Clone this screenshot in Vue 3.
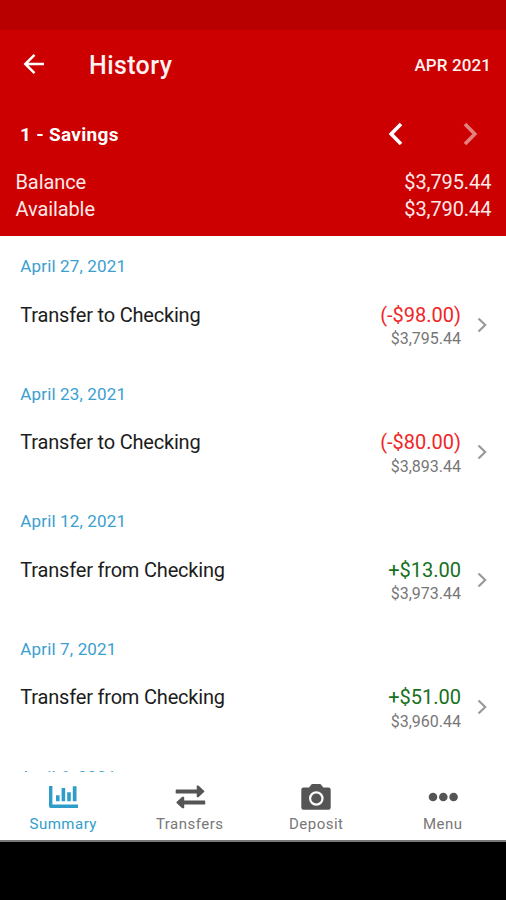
<script setup>
const groups = [
  { date: 'April 27, 2021', title: 'Transfer to Checking', amount: '(-$98.00)', balance: '$3,795.44', debit: true },
  { date: 'April 23, 2021', title: 'Transfer to Checking', amount: '(-$80.00)', balance: '$3,893.44', debit: true },
  { date: 'April 12, 2021', title: 'Transfer from Checking', amount: '+$13.00', balance: '$3,973.44', debit: false },
  { date: 'April 7, 2021', title: 'Transfer from Checking', amount: '+$51.00', balance: '$3,960.44', debit: false },
]
</script>

<template>
  <div class="screen">
    <div class="status"></div>
    <header class="head">
      <div class="bar">
        <svg class="back" width="22" height="22" viewBox="0 0 22 22"><path d="M11.5 1.8 2.3 11l9.2 9.2M2.5 11H21" /></svg>
        <h1>History</h1>
        <span class="month">APR 2021</span>
      </div>
      <div class="account">
        <span class="name">1 - Savings</span>
        <svg class="prev" width="16" height="24" viewBox="0 0 16 24"><path d="M13 2 3.2 12 13 22" /></svg>
        <svg class="next" width="16" height="24" viewBox="0 0 16 24"><path d="M3 2l9.8 10L3 22" /></svg>
      </div>
      <div class="totals">
        <div class="total"><span>Balance</span><span class="sum">$3,795.44</span></div>
        <div class="total"><span>Available</span><span class="sum">$3,790.44</span></div>
      </div>
    </header>

    <main class="list">
      <section v-for="g in groups" :key="g.date" class="group">
        <div class="date">{{ g.date }}</div>
        <div class="entry">
          <span class="title">{{ g.title }}</span>
          <div class="figures">
            <span class="amount" :class="{ debit: g.debit }">{{ g.amount }}</span>
            <span class="balance">{{ g.balance }}</span>
          </div>
          <svg class="more" width="11" height="16" viewBox="0 0 11 16"><path d="M1.5 1.5 8.2 8l-6.7 6.5" /></svg>
        </div>
      </section>
      <section class="group last"><div class="date">April 6, 2021</div></section>
    </main>

    <nav class="tabs">
      <a class="tab active">
        <svg width="32" height="28" viewBox="0 0 32 28">
          <path d="M3.7 3v20.3H31" fill="none" stroke="currentColor" stroke-width="3.4" stroke-linejoin="round" />
          <path d="M9 12.3h3.6v5.9H9zM14.6 5h3.6v13.2h-3.6zM20.2 9.2h3.6v9h-3.6zM25.8 3.2h3.7v15h-3.7z" />
        </svg>
        <span>Summary</span>
      </a>
      <a class="tab">
        <svg width="32" height="28" viewBox="0 0 32 28">
          <g stroke="currentColor" stroke-width="1.2" stroke-linejoin="round">
            <path d="M2.3 7h21V3.2h1l5.6 5.2-5.6 5.2h-1V9.9h-21zM30.6 18h-21v-3.7h-1L3 19.5l5.6 5.2h1V21h21z" />
          </g>
        </svg>
        <span>Transfers</span>
      </a>
      <a class="tab">
        <svg width="32" height="28" viewBox="0 0 32 28">
          <path d="M3.5 4.5H9l2-2.6q.5-.8 1.5-.8h7.3q1 0 1.5.8l2 2.6h5.2q2.2 0 2.2 2.2v17.8q0 2.2-2.2 2.2h-25q-2.2 0-2.2-2.2V6.7q0-2.2 2.2-2.2z" />
          <circle cx="16.3" cy="15.5" r="6.2" fill="none" stroke="#fff" stroke-width="2.2" />
        </svg>
        <span>Deposit</span>
      </a>
      <a class="tab">
        <svg width="32" height="28" viewBox="0 0 32 28">
          <circle cx="6" cy="14" r="4.3" /><circle cx="16.3" cy="14" r="4.3" /><circle cx="26.6" cy="14" r="4.3" />
        </svg>
        <span>Menu</span>
      </a>
    </nav>
    <div class="system"></div>
  </div>
</template>

<style>
body { margin: 0; background: #000; }
</style>

<style scoped>
.screen {
  width: 506px;
  height: 900px;
  display: flex;
  flex-direction: column;
  overflow: hidden;
  background: #fff;
  font-family: Roboto, "Liberation Sans", sans-serif;
}
.screen * { box-sizing: border-box; }
svg { flex: none; display: block; fill: currentColor; }
.status { flex: none; height: 30px; background: #b90000; }
.head { flex: none; height: 206px; background: #cc0000; color: #fff; }
.bar { height: 70px; display: flex; align-items: center; padding: 0 15px 0 23px; }
.back { fill: none; stroke: #fff; stroke-width: 2.5; margin-top: -2px; }
h1 { margin: 2px 0 0 44px; font-size: 25px; font-weight: 500; line-height: 30px; letter-spacing: .4px; color: #fff2f2; }
.month { margin-left: auto; font-size: 17px; font-weight: 500; letter-spacing: .1px; color: #fff2f2; }
.account { height: 68px; display: flex; align-items: center; padding: 0 28px 0 20px; }
.name { flex: 1; font-size: 19px; font-weight: 700; letter-spacing: .3px; }
.prev, .next { fill: none; stroke: #fff; stroke-width: 3.6; }
.next { margin-left: 58px; opacity: .5; }
.totals { padding: 1px 14.7px 0 15.5px; }
.total { display: flex; justify-content: space-between; font-size: 20px; line-height: 27px; letter-spacing: -.1px; color: #ffe9e9; }
.list { flex: none; height: 536px; overflow: hidden; }
.group { height: 127.5px; padding: 17.3px 18px 0 20.3px; }
.group.last { padding-top: 18px; }
.date { font-size: 17px; line-height: 26px; letter-spacing: .15px; color: #3ba0cf; }
.entry { display: flex; align-items: flex-start; padding-top: 21.4px; }
.title { flex: 1; font-size: 20px; line-height: 28px; letter-spacing: -.19px; color: #1c1c1c; }
.figures { display: flex; flex-direction: column; align-items: flex-end; }
.amount { font-size: 20px; line-height: 28px; color: #17701c; }
.amount.debit { color: #f02626; }
.balance { margin-top: .4px; font-size: 16px; line-height: 20px; color: #777; }
.more { margin: 16px 0 0 16px; fill: none; stroke: #999; stroke-width: 2.2; }
.tabs { flex: none; height: 70px; display: grid; grid-template-columns: repeat(4, 1fr); border-bottom: 2px solid #777; }
.tab { display: flex; flex-direction: column; align-items: center; padding-top: 11px; color: #555; }
.tab span { font-size: 15px; line-height: 18px; margin-top: 4px; letter-spacing: .5px; color: #777; }
.tab.active, .tab.active span { color: #2f9dc9; }
.system { flex: 1; background: #000; }
</style>
